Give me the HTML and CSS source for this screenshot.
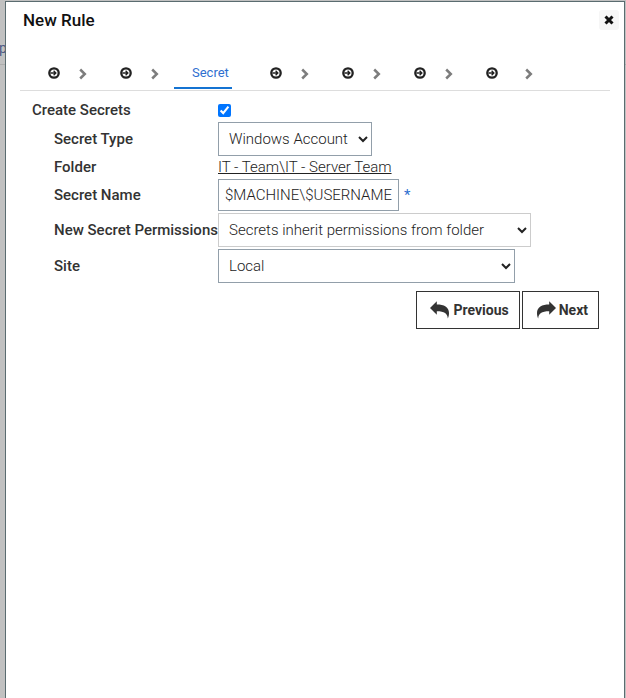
FILE: index.html
```html
<!DOCTYPE html>
<html lang="en">
<head>
<meta charset="utf-8">
<title>New Rule</title>
<link rel="stylesheet" href="styles.css">
</head>
<body>
<svg class="defs" aria-hidden="true">
  <symbol id="circle" viewBox="0 0 12 12"><circle cx="6" cy="6" r="4.700" fill="none" stroke="currentColor" stroke-width="2.300"/><path d="M2.500 6H7.500M5.600 3.700L7.900 6L5.600 8.300" fill="none" stroke="currentColor" stroke-width="1.300"/></symbol>
  <symbol id="chevron" viewBox="0 0 8 12"><path d="M1.200 1.500L5.800 6L1.200 10.500" fill="none" stroke="currentColor" stroke-width="2.500"/></symbol>
  <symbol id="arrow" viewBox="0 0 20 18"><path d="M20 7L13.200 .3V3.500C6 3.500 1 6 1 12c0 2.200.4 4 1.200 5.400C2.600 12.400 5.500 10.300 13.200 10.300V13.700Z" fill="currentColor"/></symbol>
</svg>
<div class="backdrop" aria-hidden="true"><span>p</span></div>
<main class="dialog" role="dialog" aria-labelledby="title">
  <header class="head">
    <h1 id="title">New Rule</h1>
    <button class="close" type="button" aria-label="Close"><svg viewBox="0 0 10 10"><path d="M1.500 1.500L8.500 8.500M8.500 1.500L1.500 8.500" stroke="currentColor" stroke-width="3"/></svg></button>
  </header>
  <nav class="steps" aria-label="Steps">
    <a class="step" href="#1" aria-label="Step 1"><svg><use href="#circle"/></svg></a>
    <svg class="sep"><use href="#chevron"/></svg>
    <a class="step" href="#2" aria-label="Step 2"><svg><use href="#circle"/></svg></a>
    <svg class="sep"><use href="#chevron"/></svg>
    <a class="step current" href="#3" aria-current="step">Secret</a>
    <a class="step" href="#4" aria-label="Step 4"><svg><use href="#circle"/></svg></a>
    <svg class="sep"><use href="#chevron"/></svg>
    <a class="step" href="#5" aria-label="Step 5"><svg><use href="#circle"/></svg></a>
    <svg class="sep"><use href="#chevron"/></svg>
    <a class="step" href="#6" aria-label="Step 6"><svg><use href="#circle"/></svg></a>
    <svg class="sep"><use href="#chevron"/></svg>
    <a class="step" href="#7" aria-label="Step 7"><svg><use href="#circle"/></svg></a>
    <svg class="sep last"><use href="#chevron"/></svg>
  </nav>
  <form class="form">
    <div class="fields">
      <label for="create">Create Secrets</label>
      <div class="value"><input id="create" type="checkbox" checked></div>
      <label class="sub" for="type">Secret Type</label>
      <div class="value"><select id="type"><option>Windows Account</option></select></div>
      <label class="sub" for="folder">Folder</label>
      <div class="value"><a id="folder" class="link" href="#folder">IT - Team\IT - Server Team</a></div>
      <label class="sub" for="name">Secret Name</label>
      <div class="value"><input id="name" class="text" type="text" value="$MACHINE\$USERNAME"><span class="required">*</span></div>
      <label class="sub" for="perm">New Secret Permissions</label>
      <div class="value"><select id="perm" class="perm"><option>Secrets inherit permissions from folder</option></select></div>
      <label class="sub" for="site">Site</label>
      <div class="value"><select id="site" class="site"><option>Local</option></select></div>
    </div>
    <div class="actions">
      <button class="btn" type="button"><svg class="flip"><use href="#arrow"/></svg>Previous</button>
      <button class="btn" type="button"><svg><use href="#arrow"/></svg>Next</button>
    </div>
  </form>
</main>
</body>
</html>
```
FILE: styles.css
```css
* {
  box-sizing: border-box;
}

body {
  margin: 0;
  min-height: 100vh;
  display: flex;
  padding: 1px 1px 0 5px;
  background: #c1c1c1;
  color: #333;
  font: 15px/19px Roboto, sans-serif;
}

.defs {
  position: absolute;
  width: 0;
  height: 0;
}

.backdrop {
  position: absolute;
  top: 0;
  left: 0;
  width: 100%;
  height: 65px;
  padding-top: 39px;
  border-bottom: 1px solid #adadad;
  color: #4d5a85;
  font-size: 14px;
}

.backdrop span {
  margin-left: -1px;
}

.dialog {
  position: relative;
  flex: 1;
  border: 1px solid #5a6c70;
  border-bottom: 0;
  background: #fff;
}

.head {
  display: flex;
  align-items: center;
  justify-content: space-between;
  height: 36px;
  padding: 0 5px 0 17px;
}

h1 {
  margin: 0;
  color: #111;
  font-size: 17px;
  font-weight: 500;
}

.close {
  display: grid;
  place-items: center;
  width: 20px;
  height: 20px;
  padding: 0;
  border: 0;
  border-radius: 3px;
  background: #f6f6f6;
  color: #111;
}

.close svg {
  width: 10px;
  height: 10px;
}

.steps {
  display: flex;
  align-items: center;
  height: 53px;
  margin: 0 14px;
  padding: 20px 0 1px 10px;
  border-bottom: 1px solid #ddd;
}

.step {
  display: flex;
  align-items: center;
  height: 100%;
  padding: 0 3px 0 18px;
  border-bottom: 2px solid transparent;
  color: #222;
  font-size: 13px;
  text-decoration: none;
}

.step svg,
.sep {
  width: 12px;
  height: 12px;
}

.sep {
  width: 8px;
  margin: 0 15px 0 16px;
  color: #7d7d7d;
}

.sep.last {
  margin-left: 24px;
}

.current {
  margin-right: 20px;
  border-color: #1473d2;
  color: #2f6fd0;
}

.form {
  padding: 10px 25px 0 26px;
}

.fields {
  display: grid;
  grid-template-columns: 186px 1fr;
  row-gap: 2px;
  align-items: center;
}

label {
  font-weight: 500;
  white-space: nowrap;
}

.sub {
  padding-left: 22px;
}

.value {
  display: flex;
  align-items: center;
  min-height: 19px;
}

input[type="checkbox"] {
  width: 13px;
  height: 13px;
  margin: 0;
}

select,
.text {
  border: 1px solid #929faa;
  border-radius: 0;
  background-color: #fff;
  color: #222;
  font: 300 15px/19px Roboto, sans-serif;
}

select {
  width: 154px;
  height: 34px;
  padding: 0 1px 0 6px;
}

.perm {
  width: 313px;
  border-color: #ccc;
}

.site {
  width: 297px;
}

.text {
  width: 181px;
  height: 32px;
  padding: 0 6px;
}

.link {
  color: #222;
  font-weight: 300;
}

.required {
  margin-left: 5px;
  color: #2f6fd0;
}

.actions {
  display: flex;
  justify-content: flex-end;
  gap: 2px;
  margin-top: 8px;
}

.btn {
  display: flex;
  align-items: center;
  gap: 3px;
  height: 38px;
  padding: 0 10px 0 13px;
  border: 1px solid #333;
  background: #fff;
  color: #333;
  font: 700 14px/19px Roboto, sans-serif;
}

.btn svg {
  width: 20px;
  height: 18px;
}

.flip {
  transform: scaleX(-1);
}
```
